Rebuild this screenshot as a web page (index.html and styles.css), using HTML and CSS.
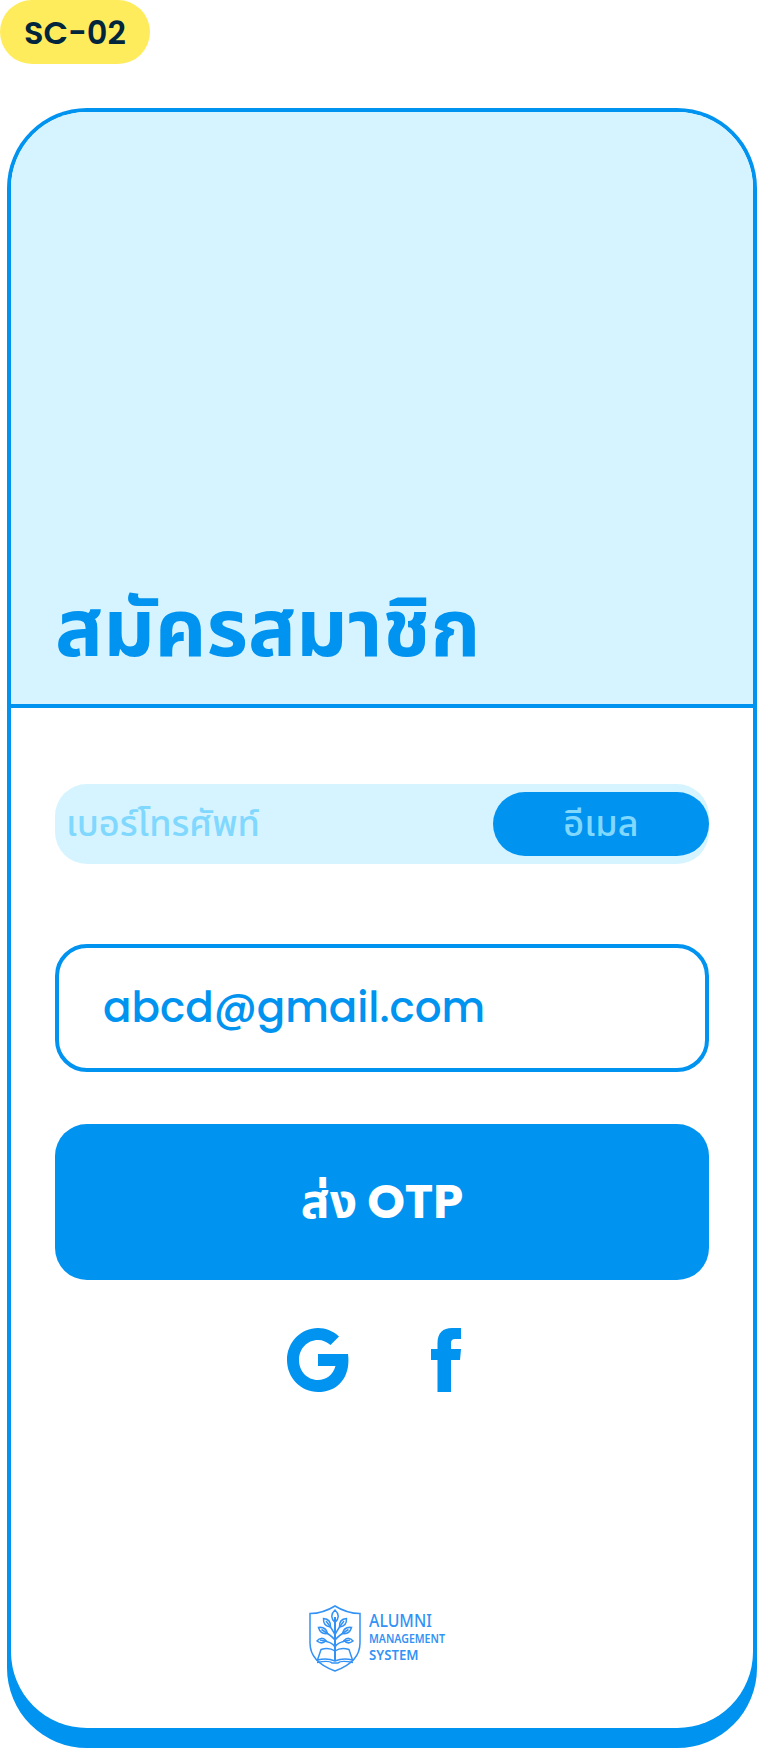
FILE: index.html
```html
<!DOCTYPE html>
<html lang="th">
<head>
<meta charset="utf-8">
<title>สมัครสมาชิก</title>
<link rel="stylesheet" href="styles.css">
</head>
<body>
<div class="tag"><span class="tag-text">SC-02</span></div>
<div class="frame">
<main class="phone">
  <header class="hero"><h1 class="title">สมัครสมาชิก</h1></header>
  <section class="form">
    <div class="switch">
      <span class="switch-phone">เบอร์โทรศัพท์</span>
      <span class="switch-email">อีเมล</span>
    </div>
    <div class="field"><span class="field-text">abcd@gmail.com</span></div>
    <button class="submit"><span class="submit-th">ส่ง</span><span class="submit-en">OTP</span></button>
    <div class="social">
      <svg class="google" viewBox="0 0 62 64"><path d="M52 8.500C46 3 39 0 31 0C14 0 0 14 0 32S14 64 31 64C51 64 64 49 61 26H31V38H48.500C46 47 39 52 31 52C20 52 12 43 12 32S20 12 31 12C36 12 40 14 43.500 17Z"/></svg>
      <svg class="facebook" viewBox="0 0 30 64"><path d="M6.500 64V32H0V21H6.500V15C6.500 5 12 0 21 0H30V11H24Q20 11 20 15V21H30L29 32H20V64Z"/></svg>
    </div>
  </section>
  <footer class="brand">
    <svg class="crest" viewBox="0 0 52 67">
      <path d="M26 1Q14 8.500 1 8.500V38Q1 57 26 66Q51 57 51 38V8.500Q38 8.500 26 1Z"/>
      <path class="trunk" d="M26 55V12"/>
      <path d="M26 30Q24 25 17 16M26 30Q28 25 35 16M26 35Q23 31 12.500 24.500M26 35Q29 31 39.500 24.500M26 42Q24 37 11 35M26 42Q28 37 41 35"/>
      <path d="M26 5Q19.500 11 26 17.500Q32.500 11 26 5ZM21.500 22Q14 21 14.500 13.500Q22 14 21.500 22ZM30.500 22Q38 21 37.500 13.500Q30 14 30.500 22ZM18.500 28.500Q11.500 29.500 9.500 22.500Q17 21.500 18.500 28.500ZM33.500 28.500Q40.500 29.500 42.500 22.500Q35 21.500 33.500 28.500ZM17 35.500Q13 40 8 36Q12 31 17 35.500ZM35 35.500Q39 40 44 36Q40 31 35 35.500Z"/>
      <path d="M26 46Q20 42 12 44.500L8.500 55Q18 52.500 26 56Q34 52.500 43.500 55L40 44.500Q32 42 26 46ZM8 57.500Q20 55 23 58H29Q32 55 44 57.500"/>
    </svg>
    <div class="brand-name">
      <span class="brand-1">ALUMNI</span>
      <span class="brand-2">MANAGEMENT</span>
      <span class="brand-3">SYSTEM</span>
    </div>
  </footer>
</main>
</div>
</body>
</html>
```
FILE: styles.css
```css
* { box-sizing: border-box; }
body {
  margin: 0;
  background: #fff;
  color: #0093f0;
  font-family: Poppins, "Noto Sans Thai", "Noto Sans", sans-serif;
}
.tag {
  width: 150px;
  height: 64px;
  padding-top: 2px;
  border-radius: 32px;
  background: #ffec5c;
  color: #00253c;
  display: flex;
  align-items: center;
  justify-content: center;
  font: 600 32px/62px Poppins, Inter, sans-serif;
}
.frame {
  width: 750px;
  height: 1640px;
  margin: 44px 0 0 7px;
  padding: 4px 4px 20px;
  border-radius: 80px;
  background: #0093f0;
}
.phone {
  height: 100%;
  border-radius: 76px;
  background: #fff;
  overflow: hidden;
  display: flex;
  flex-direction: column;
}
.hero {
  height: 596px;
  flex: none;
  padding: 0 44px 28px;
  background: #d6f4ff;
  border-bottom: 4px solid #0093f0;
  display: flex;
  align-items: flex-end;
}
.title {
  margin: 0;
  font-size: 80px;
  line-height: 96px;
  font-weight: 700;
  white-space: nowrap;
}
.form { padding: 76px 44px 0; }
.switch {
  height: 80px;
  border-radius: 32px;
  background: #d6f4ff;
  color: #80d8ff;
  display: flex;
  align-items: center;
  justify-content: space-between;
  padding-left: 11px;
  font-size: 36px;
  font-weight: 500;
  line-height: 64px;
}
.switch-email {
  width: 216px;
  height: 64px;
  border-radius: 32px;
  background: #0093f0;
  text-align: center;
}
.field {
  height: 128px;
  margin-top: 80px;
  padding-left: 44px;
  border: 4px solid #0093f0;
  border-radius: 32px;
  display: flex;
  align-items: center;
  font: 500 42px/60px Poppins, Inter, sans-serif;
}
.submit {
  width: 100%;
  height: 156px;
  margin-top: 52px;
  padding: 0;
  border: 0;
  border-radius: 32px;
  background: #0093f0;
  color: #fff;
  display: flex;
  align-items: center;
  justify-content: center;
  gap: 10px;
  font: 700 48px/64px Poppins, "Noto Sans Thai", "Noto Sans", sans-serif;
}
.social {
  margin-top: 48px;
  padding-left: 232px;
  display: flex;
  gap: 82px;
  fill: #0093f0;
}
.google { width: 62px; height: 64px; }
.facebook { width: 30px; height: 64px; }
.brand {
  margin: auto 0 56px 298px;
  display: flex;
  gap: 8px;
  color: #3392f5;
}
.crest {
  width: 52px;
  height: 67px;
  fill: none;
  stroke: #3392f5;
  stroke-width: 1.5;
}
.trunk { stroke-width: 2; }
.brand-name {
  padding-top: 5px;
  display: flex;
  flex-direction: column;
  align-items: flex-start;
  font-family: "Noto Sans", sans-serif;
  font-weight: 600;
  white-space: nowrap;
}
.brand-name span { transform-origin: left; }
.brand-1 { font-size: 18px; line-height: 21px; font-weight: 500; transform: scaleX(0.88); }
.brand-2 { font-size: 12.3px; line-height: 15px; transform: scaleX(0.86); }
.brand-3 { font-size: 14px; line-height: 18px; transform: scaleX(0.94); }
```
